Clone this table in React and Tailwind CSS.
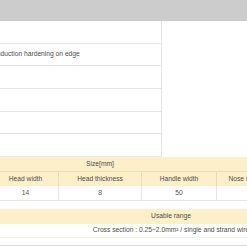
import React from 'react'

const specRows = ['', 'Induction hardening on edge', '', '', '', '']

function App() {
  return (
    <div className="w-[247px] h-[247px] overflow-hidden bg-white text-[#4d4d4d] text-[6.7px] leading-none font-['Liberation_Sans',Arial,sans-serif]">
      {/* Top grey band */}
      <div className="h-[21px] bg-[#cccccc]" />

      {/* Spec table */}
      <div className="flex">
        <div className="w-[162px] border-r border-[#e6e6e6]">
          {specRows.map((text, i) => (
            <div
              key={i}
              className={`flex items-center border-b border-[#e6e6e6] ${i % 3 === 1 ? 'h-[22px]' : 'h-[23px]'}`}
            >
              {text && <span className="-ml-[5px] whitespace-nowrap">{text}</span>}
            </div>
          ))}
        </div>
      </div>

      {/* Size table */}
      <div className="bg-[#fdf0c8]">
        <div className="flex h-[15px] items-center border-b border-[#eee2bd]">
          <div className="-ml-[7px] w-[214px] shrink-0 text-center">Size[mm]</div>
        </div>
        <div className="flex h-[14px] -ml-[7px]">
          <div className="w-[66px] shrink-0 flex items-center justify-center border-r border-[#e8dcb8]">Head width</div>
          <div className="w-[83px] shrink-0 flex items-center justify-center border-r border-[#e8dcb8]">Head thickness</div>
          <div className="w-[75px] shrink-0 flex items-center justify-center border-r border-[#e8dcb8]">Handle width</div>
          <div className="w-[56px] shrink-0 flex items-center justify-center whitespace-nowrap">Nose width</div>
        </div>
      </div>
      <div className="flex h-[15px] -ml-[7px] border-b border-[#e6e6e6] text-[#555555]">
        <div className="w-[66px] shrink-0 flex items-center justify-center border-r border-[#e6e6e6]">14</div>
        <div className="w-[83px] shrink-0 flex items-center justify-center border-r border-[#e6e6e6]">8</div>
        <div className="w-[75px] shrink-0 flex items-center justify-center border-r border-[#e6e6e6]">50</div>
        <div className="w-[56px] shrink-0" />
      </div>

      {/* Usable range */}
      <div className="mt-[8px] flex h-[15px] items-center bg-[#fdf0c8]">
        <div className="w-[342px] shrink-0 text-center whitespace-nowrap">Usable range</div>
      </div>
      <div className="flex h-[14px] items-center border-b border-[#f0f0f0]">
        <div className="w-[342px] shrink-0 text-center whitespace-nowrap">
          Cross section : 0.25~2.0mm² / single and strand wire
        </div>
      </div>
      <div className="h-[8px] border-b border-[#dddddd]" />
    </div>
  )
}

export default App
